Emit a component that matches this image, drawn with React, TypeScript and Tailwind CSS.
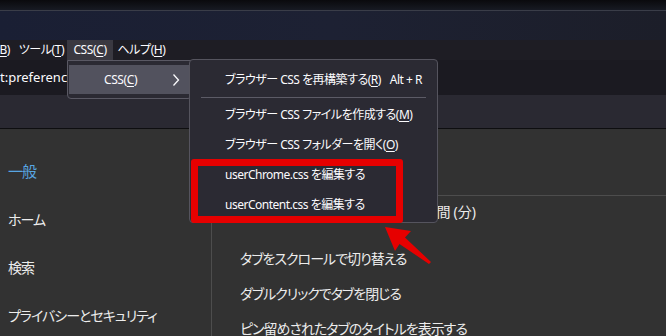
import React from "react";

const jp = "font-['Noto_Sans','Noto_Sans_CJK_JP',sans-serif] [font-feature-settings:'palt']";

function Key({ label, k }: { label: string; k: string }) {
  return (
    <span className="whitespace-nowrap">
      {label}(<u className="underline-offset-2">{k}</u>)
    </span>
  );
}

function Chevron() {
  return (
    <svg width="8" height="14" viewBox="0 0 8 14" className="text-[#fbfbfe]">
      <polyline points="1.5,1.5 6.5,7 1.5,12.5" fill="none" stroke="currentColor" strokeWidth="1.3" />
    </svg>
  );
}

function SubItem({ children, accel }: { children: React.ReactNode; accel?: string }) {
  return (
    <div className="h-[30px] flex items-center justify-between pl-[35px] pr-[15px] whitespace-nowrap">
      <span>{children}</span>
      {accel && <span>{accel}</span>}
    </div>
  );
}

export default function App() {
  const sidebar = ["ホーム", "検索", "プライバシーとセキュリティ"];

  return (
    <div className={`relative w-[666px] h-[336px] overflow-hidden flex flex-col bg-[#323232] text-[#fbfbfe] ${jp}`}>
      {/* title / tab strip */}
      <div className="h-[11px] shrink-0 bg-gradient-to-b from-[#0a0a0d] to-[#171a23] border-b border-[#3a3d48]" />
      <div className="h-[29px] shrink-0 bg-gradient-to-r from-[#1a1f34] via-[#1d2133] to-[#1c1e29]" />

      {/* menu bar */}
      <div className="h-[20px] shrink-0 bg-[#1e1d24] flex text-[12px] tracking-[-0.4px]">
        <div className="w-[16px] flex justify-end items-center overflow-hidden">
          <span className="pr-[6px]">
            <Key label="ブックマーク" k="B" />
          </span>
        </div>
        <div className="w-[51px] flex items-center justify-center">
          <Key label="ツール" k="T" />
        </div>
        <div className="w-[46px] flex items-center justify-center bg-[#3a3941]">
          <Key label="CSS" k="C" />
        </div>
        <div className="w-[57px] flex items-center justify-center">
          <Key label="ヘルプ" k="H" />
        </div>
      </div>

      {/* url bar */}
      <div className="h-[35px] shrink-0 bg-[#1b1a21] flex items-center text-[13px] whitespace-nowrap">
        t:preferences
      </div>

      {/* toolbar */}
      <div className="h-[34px] shrink-0 bg-[#2a2932] border-b border-[#0e0e10]" />

      {/* page */}
      <div className="flex-1 flex text-[14px] tracking-[-1px] text-[#ececec]">
        <div className="w-[212px] shrink-0 border-r border-[#4d4d4d] pt-[18px] pl-[8px]">
          <div className="h-[48px] flex items-center text-[15px] text-[#58a6e2]">一般</div>
          {sidebar.map((s) => (
            <div key={s} className="h-[48px] flex items-center whitespace-nowrap">
              {s}
            </div>
          ))}
        </div>
        <div className="flex-1 pt-[66px]">
          <div className="border-t border-[#4d4d4d] ml-[28px]" />
          <div className="h-[30px] flex items-center pl-[28px] whitespace-nowrap">
            未使用タブを自動で閉じるまでの時間
            <span className="tracking-normal ml-[4px]">(分)</span>
          </div>
          <div className="mt-[15px] pl-[28px] flex flex-col">
            <div className="h-[35px] flex items-center whitespace-nowrap">タブをスクロールで切り替える</div>
            <div className="h-[35px] flex items-center whitespace-nowrap">ダブルクリックでタブを閉じる</div>
            <div className="h-[35px] flex items-center whitespace-nowrap">ピン留めされたタブのタイトルを表示する</div>
          </div>
        </div>
      </div>

      {/* CSS menu popup */}
      <div className="absolute left-[67px] top-[60px] w-[125px] h-[39px] bg-[#2b2a33] border border-[#5a5964] rounded-b-[4px] px-[1px] py-[4px] text-[12px] tracking-[-0.4px]">
        <div className="h-[29px] bg-[#52525e] flex items-center pl-[35px] pr-[10px] justify-between">
          <Key label="CSS" k="C" />
          <Chevron />
        </div>
      </div>

      {/* submenu */}
      <div className="absolute left-[189px] top-[59px] w-[249px] h-[164px] bg-[#2b2a33] border border-[#55545e] rounded-[4px] pt-[5px] text-[12px] tracking-[-0.5px] text-[#fbfbfe]">
        <SubItem accel="Alt + R">
          ブラウザー CSS を再構築する(<u className="underline-offset-2">R</u>)
        </SubItem>
        <div className="h-[5px] flex items-center px-[11px]">
          <div className="h-px w-full bg-[#5c5b66]" />
        </div>
        <SubItem>
          ブラウザー CSS ファイルを作成する(<u className="underline-offset-2">M</u>)
        </SubItem>
        <SubItem>
          ブラウザー CSS フォルダーを開く(<u className="underline-offset-2">O</u>)
        </SubItem>
        <SubItem>userChrome.css を編集する</SubItem>
        <SubItem>userContent.css を編集する</SubItem>
      </div>

      {/* annotation: red box */}
      <div className="absolute left-[191px] top-[159px] w-[212px] h-[64px] border-[7px] border-[#e60000] rounded-[3px]" />

      {/* annotation: arrow */}
      <svg className="absolute left-0 top-0 pointer-events-none" width="666" height="336" viewBox="0 0 666 336">
        <polygon
          points="385,227 411,231 405,237.5 431,262 429,264 399.5,244 395,251"
          fill="#e60000"
        />
      </svg>
    </div>
  );
}
